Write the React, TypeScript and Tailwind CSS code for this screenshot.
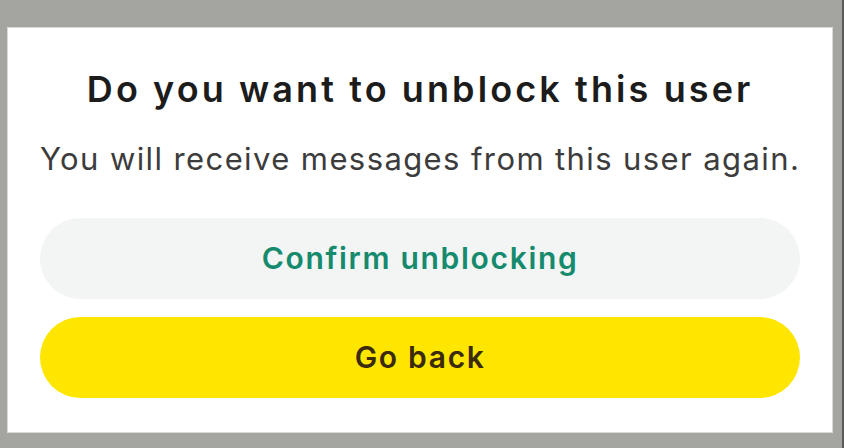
import React from "react";

export default function App() {
  return (
    <div className="w-[844px] h-[448px] bg-[#a4a4a0] pl-[8px] pt-[28px] pr-[10px] pb-[16px] border-r-2 border-[#5a5a58] flex">
      <div className="flex-1 bg-white flex flex-col items-center pt-[39px] px-[32px] pb-[34px] shadow-[0_0_0_1px_#d8d8d6] font-['Inter',sans-serif]">
        <h1 className="text-[36px] leading-[44px] font-semibold tracking-[3.1px] text-[#1c1c1c] whitespace-nowrap">
          Do you want to unblock this user
        </h1>
        <p className="mt-[28px] text-[31px] leading-[40px] tracking-[1.4px] text-[#3c3c3c] whitespace-nowrap">
          You will receive messages from this user again.
        </p>
        <button className="mt-[39px] w-full h-[81px] rounded-full bg-[#f2f5f4] text-[#158a6c] text-[30px] font-semibold tracking-[1.7px]">
          Confirm unblocking
        </button>
        <button className="mt-[18px] w-full h-[81px] rounded-full bg-[#ffe600] text-[#3b2b0c] text-[30px] font-semibold tracking-[1.7px]">
          Go back
        </button>
      </div>
    </div>
  );
}
